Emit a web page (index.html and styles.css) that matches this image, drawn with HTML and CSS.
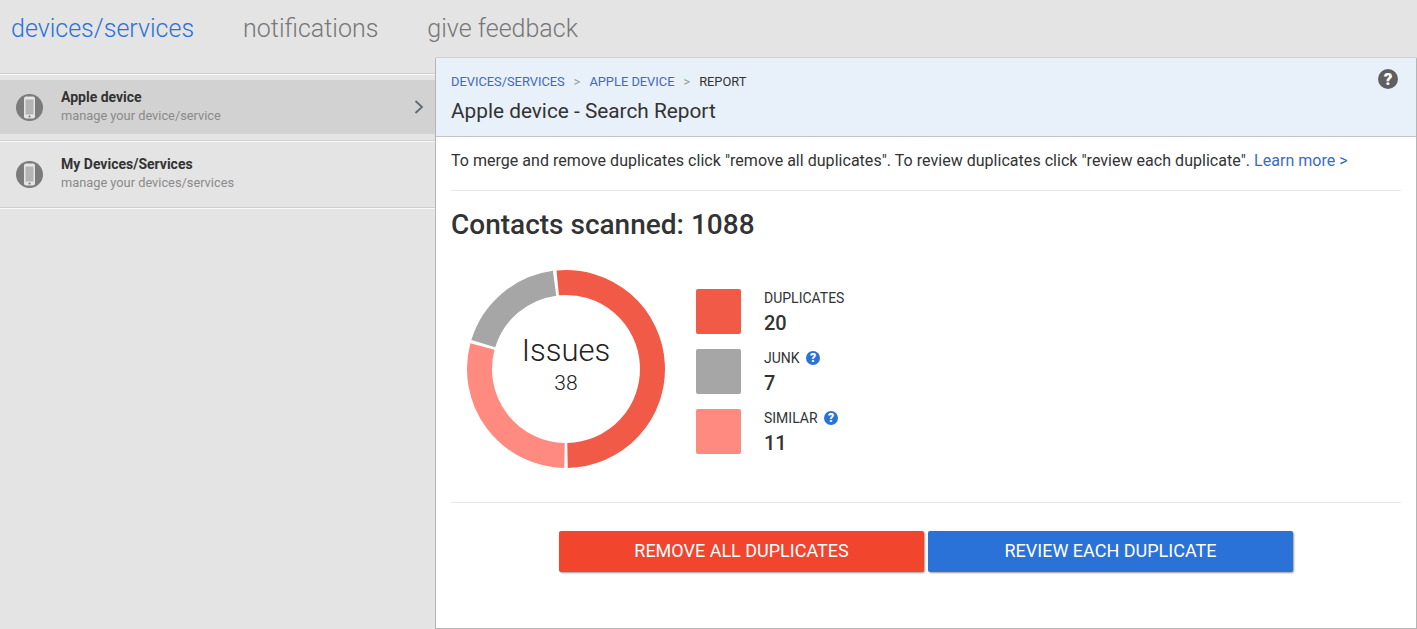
FILE: index.html
```html
<!DOCTYPE html>
<html>
<head>
    <meta charset="utf-8" />
    <title>Search Report</title>
    <link rel="stylesheet" href="styles.css">
</head>
<body>
    <!-- top nav -->
    <div class="topnav">
        <a class="navlink active">devices/services</a>
        <a class="navlink">notifications</a>
        <a class="navlink">give feedback</a>
    </div>
    <div class="page">
        <!-- left list -->
        <div class="sidebar">
            <div class="side-item selected">
                <svg class="phone" width="27" height="27" viewBox="0 0 27 27">
                    <circle cx="13.5" cy="13.5" r="13.5" fill="#7b7b7b"/>
                    <rect x="8" y="2.5" width="11" height="22" rx="2" fill="#e4e4e4"/>
                    <rect x="9.5" y="5.5" width="8" height="15" fill="#b4b4b4"/>
                    <circle cx="13.5" cy="22.5" r="1" fill="#777"/>
                </svg>
                <div class="side-text">
                    <div class="side-title">Apple device</div>
                    <div class="side-sub">manage your device/service</div>
                </div>
                <svg class="chevron" width="10" height="14" viewBox="0 0 10 14">
                    <path d="M1.5 1 L8 7 L1.5 13" fill="none" stroke="#5f6a75" stroke-width="1.8"/>
                </svg>
            </div>
            <div class="side-item">
                <svg class="phone" width="27" height="27" viewBox="0 0 27 27">
                    <circle cx="13.5" cy="13.5" r="13.5" fill="#7b7b7b"/>
                    <rect x="8" y="2.5" width="11" height="22" rx="2" fill="#e4e4e4"/>
                    <rect x="9.5" y="5.5" width="8" height="15" fill="#b4b4b4"/>
                    <circle cx="13.5" cy="22.5" r="1" fill="#777"/>
                </svg>
                <div class="side-text">
                    <div class="side-title">My Devices/Services</div>
                    <div class="side-sub">manage your devices/services</div>
                </div>
            </div>
        </div>
        <!-- report panel -->
        <div class="panel">
            <div class="panel-head">
                <div class="crumbs">
                    <a>Devices/Services</a><span class="sep">&gt;</span><a>Apple device</a><span class="sep">&gt;</span><span>Report</span>
                </div>
                <h1 class="panel-title">Apple device - Search Report</h1>
                <span class="help">?</span>
            </div>
            <div class="panel-body">
                <p class="intro">To merge and remove duplicates click "remove all duplicates". To review duplicates click "review each duplicate". <a>Learn more &gt;</a></p>
                <h2 class="scanned">Contacts scanned: 1088</h2>
                <div class="report">
                    <div class="donut">
                        <svg width="200" height="200" viewBox="0 0 200 200">
                            <g fill="none" stroke-width="25">
                                <path d="M91.71 13.9 A86.5 86.5 0 1 1 101.51 186.49" stroke="#f25a48"/>
                                <path d="M98.49 186.49 A86.5 86.5 0 0 1 16.45 77.61" stroke="#ff8a80"/>
                                <path d="M17.28 74.71 A86.5 86.5 0 0 1 88.56 14.26" stroke="#a6a6a6"/>
                            </g>
                        </svg>
                        <div class="donut-label">
                            <div class="donut-title">Issues</div>
                            <div class="donut-num">38</div>
                        </div>
                    </div>
                    <div class="legend">
                        <div class="legend-row">
                            <div class="swatch red"></div>
                            <div>
                                <div class="legend-name">Duplicates</div>
                                <div class="legend-num">20</div>
                            </div>
                        </div>
                        <div class="legend-row">
                            <div class="swatch gray"></div>
                            <div>
                                <div class="legend-name">Junk <span class="tip">?</span></div>
                                <div class="legend-num">7</div>
                            </div>
                        </div>
                        <div class="legend-row">
                            <div class="swatch pink"></div>
                            <div>
                                <div class="legend-name">Similar <span class="tip">?</span></div>
                                <div class="legend-num">11</div>
                            </div>
                        </div>
                    </div>
                </div>
                <div class="actions">
                    <button class="btn btn-red">Remove all duplicates</button>
                    <button class="btn btn-blue">Review each duplicate</button>
                </div>
            </div>
        </div>
    </div>
</body>
</html>
```

FILE: styles.css
```css
/*reset*/
html, body {
    margin: 0;
    padding: 0;
    height: 100%;
    overflow: hidden;
}
body {
    display: flex;
    flex-direction: column;
    background-color: #e4e4e4;
    font-family: Roboto, "Liberation Sans", sans-serif;
    color: #333;
}
/*top nav*/
.topnav {
    height: 57px;
    flex: none;
    display: flex;
    gap: 49px;
    padding-left: 11px;
    box-sizing: border-box;
}
.navlink {
    font-size: 25px;
    font-weight: 300;
    line-height: 58px;
    color: #777;
}
.navlink.active {
    color: #2a72d8;
}
.page {
    flex: 1;
    display: flex;
    min-height: 0;
}
/*left list*/
.sidebar {
    width: 435px;
    flex: none;
    padding-top: 16px;
    box-sizing: border-box;
}
.side-item {
    height: 67px;
    display: flex;
    align-items: center;
    padding: 0 16px 2px;
    box-sizing: border-box;
    border-bottom: 1px solid #fafafa;
    position: relative;
}
.side-item:first-child {
    border-top: 1px solid #cfcfcf;
    box-shadow: inset 0 1px 0 #fafafa;
    height: 69px;
    padding-bottom: 1px;
}
.side-item.selected::before {
    content: "";
    position: absolute;
    left: 0;
    right: 0;
    top: 6px;
    height: 54px;
    background-color: #d2d2d2;
}
.side-item::after {
    content: "";
    position: absolute;
    left: 0;
    right: 0;
    bottom: 0;
    height: 1px;
    background-color: #cfcfcf;
}
.phone {
    flex: none;
    position: relative;
}
.side-text {
    margin-left: 18px;
    flex: 1;
    position: relative;
}
.side-title {
    font-size: 14px;
    font-weight: 700;
    line-height: 18px;
    margin: -1px 0 1px;
    color: #333;
}
.side-sub {
    font-size: 12.8px;
    line-height: 18px;
    color: #8a8a8a;
}
.chevron {
    position: relative;
    flex: none;
    margin-right: -5px;
}
/*report panel*/
.panel {
    flex: 1;
    background-color: #fff;
    border: 1px solid #b5b5b5;
    border-top-color: #d0d0d0;
    border-radius: 2px 2px 0 0;
    position: relative;
}
.panel-head {
    height: 79px;
    box-sizing: border-box;
    background-color: #e8f0fa;
    border-bottom: 1px solid #c4c4c4;
    padding: 16px 15px 0;
}
.crumbs {
    font-size: 12.85px;
    line-height: 16px;
    text-transform: uppercase;
    color: #333;
}
.crumbs a {
    color: #3a6bc5;
}
.sep {
    color: #999;
    margin: 0 9px;
}
.panel-title {
    margin: 8px 0 0;
    font-size: 20.8px;
    font-weight: 400;
    line-height: 26px;
    color: #333;
}
.help {
    position: absolute;
    right: 18px;
    top: 11px;
    width: 20px;
    height: 20px;
    border-radius: 50%;
    background-color: #5f5f5f;
    color: #fff;
    font-size: 17px;
    font-weight: 900;
    line-height: 20px;
    text-align: center;
}
.panel-body {
    padding: 0 15px;
}
.intro {
    margin: 0;
    height: 54px;
    box-sizing: border-box;
    padding-top: 14px;
    font-size: 16px;
    letter-spacing: 0.03px;
    line-height: 20px;
    border-bottom: 1px solid #e8e8e8;
}
.intro a {
    color: #3a6bc5;
}
.scanned {
    margin: 17px 0 0;
    font-size: 28px;
    font-weight: 500;
    line-height: 34px;
    color: #333;
}
.report {
    display: flex;
    align-items: flex-start;
    height: 261px;
    box-sizing: border-box;
    padding: 27px 0 0 15px;
    border-bottom: 1px solid #e8e8e8;
}
.donut {
    width: 200px;
    height: 200px;
    flex: none;
    position: relative;
}
.donut svg {
    display: block;
}
.donut-label {
    position: absolute;
    left: 0;
    right: 0;
    top: 62px;
    text-align: center;
}
.donut-title {
    font-size: 31px;
    font-weight: 300;
    line-height: 40px;
    color: #222;
}
.donut-num {
    font-size: 21px;
    font-weight: 300;
    line-height: 26px;
    margin-top: -1px;
    color: #222;
}
.legend {
    margin-left: 30px;
    padding-top: 20px;
    display: flex;
    flex-direction: column;
    gap: 15px;
}
.legend-row {
    display: flex;
    gap: 23px;
    height: 45px;
}
.swatch {
    width: 45px;
    height: 45px;
    border-radius: 2px;
}
.swatch.red {
    background-color: #f25a48;
}
.swatch.gray {
    background-color: #a6a6a6;
}
.swatch.pink {
    background-color: #ff8a80;
}
.legend-name {
    font-size: 14px;
    line-height: 18px;
    text-transform: uppercase;
    color: #333;
}
.legend-num {
    font-size: 20px;
    font-weight: 500;
    line-height: 26px;
    margin-top: 3px;
}
.tip {
    display: inline-block;
    width: 14px;
    height: 14px;
    margin-left: 3px;
    margin-top: 2px;
    border-radius: 50%;
    background-color: #2a72d8;
    color: #fff;
    font-size: 12px;
    font-weight: 900;
    line-height: 14px;
    text-align: center;
    vertical-align: top;
}
/*buttons*/
.actions {
    display: flex;
    justify-content: center;
    gap: 4px;
    padding-top: 28px;
}
.btn {
    width: 365px;
    height: 41px;
    border: 0;
    border-radius: 2px;
    color: #fff;
    font-family: inherit;
    font-size: 18px;
    line-height: 39px;
    padding: 0 0 2px;
    text-transform: uppercase;
    box-shadow: 1px 1px 2px rgba(0, 0, 0, 0.4);
}
.btn-red {
    background-color: #f1452e;
}
.btn-blue {
    background-color: #2a72d8;
}
```
